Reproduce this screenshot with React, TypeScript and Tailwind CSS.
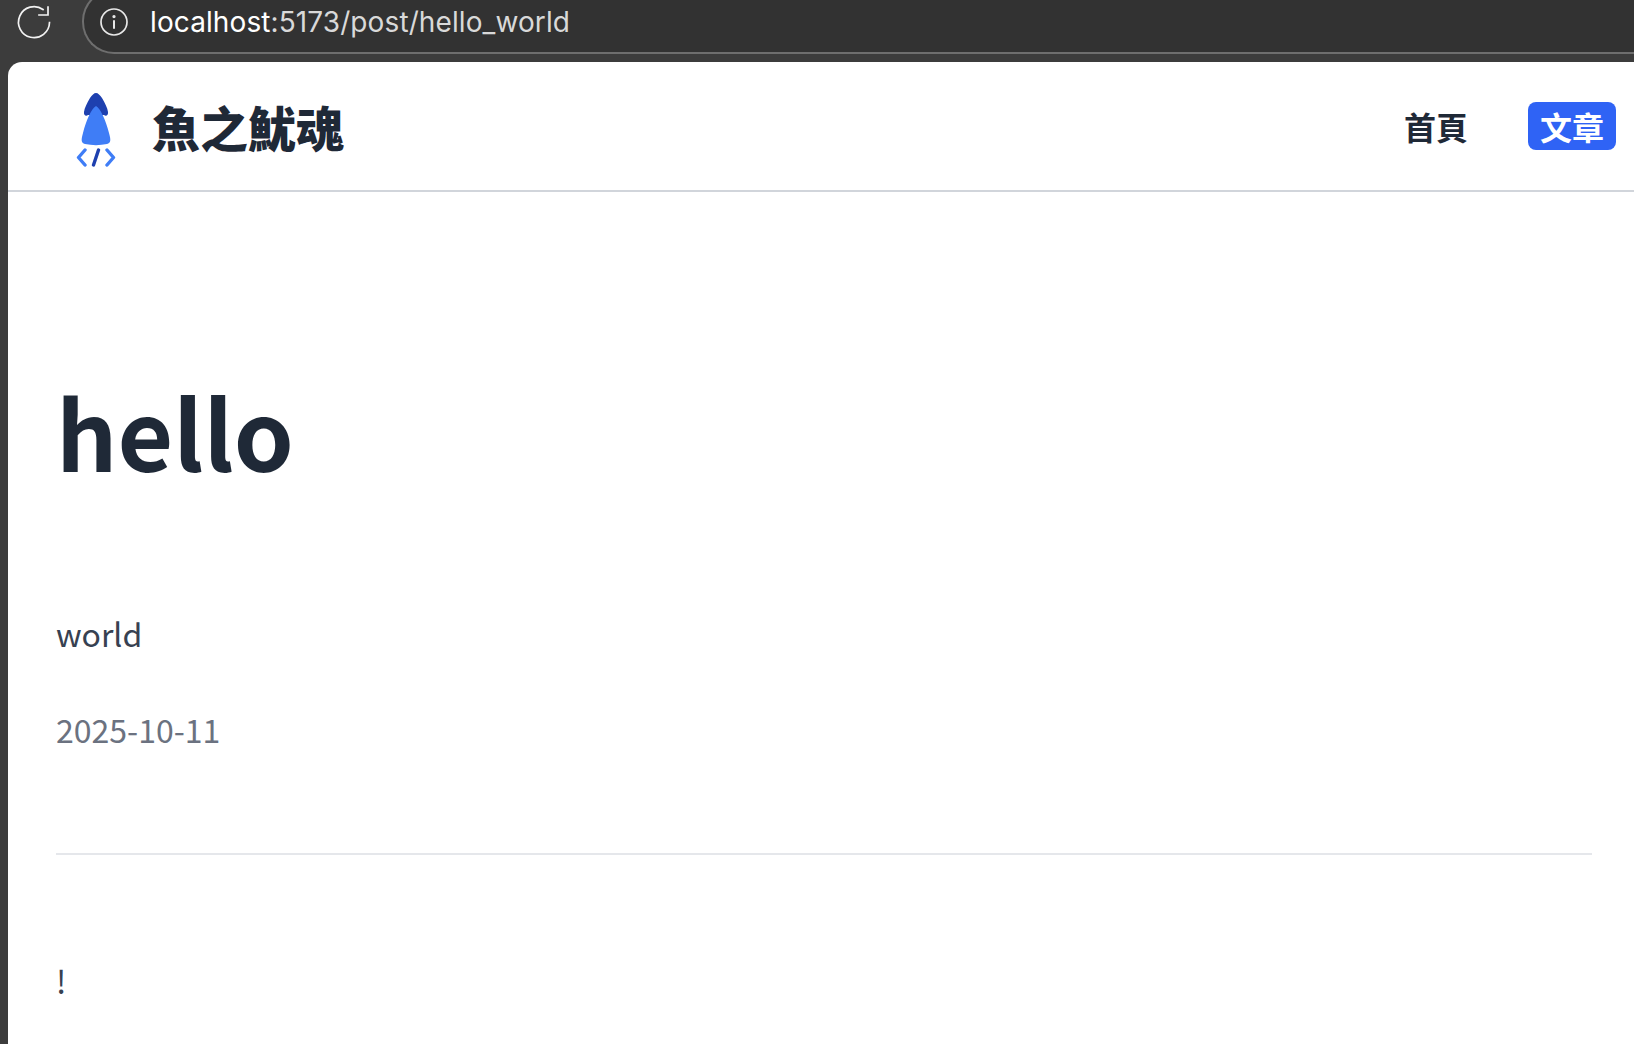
const CJK = "font-['Noto_Sans_CJK_TC','Noto_Sans_CJK_SC',sans-serif]";

function ReloadIcon() {
  return (
    <svg width="40" height="40" viewBox="0 0 40 40" fill="none" stroke="#f2f2f2" strokeWidth="1.7" strokeLinecap="square" strokeLinejoin="miter">
      <path d="M35.500 18.500A15.500 15.500 0 1 1 29 5.500" />
      <path d="M34 3v8h-9" />
    </svg>
  );
}

function InfoIcon() {
  return (
    <svg width="28" height="28" viewBox="0 0 28 28" fill="none" stroke="#e8e8e8" strokeWidth="1.7" strokeLinecap="round">
      <circle cx="14" cy="14" r="13" />
      <path d="M14 13v7" strokeWidth="2" />
      <circle cx="14" cy="8.600" r="0.800" fill="#e8e8e8" />
    </svg>
  );
}

function Logo() {
  return (
    <svg width="40" height="74" viewBox="0 0 40 74" fill="none">
      <path d="M20 0C22 0 24 2 26 5C29 10 31.500 15 32 19C32.500 22 30 24 28 22L12 22C10 24 7.500 22 8 19C8.500 15 11 10 14 5C16 2 18 0 20 0Z" fill="#1e40af" />
      <path d="M20 13C25 16 30 28 33 40C35 47 35 50 31 51C24 52.500 16 52.500 9 51C5 50 5 47 7 40C10 28 15 16 20 13Z" fill="#3f7df6" />
      <path d="M9 57L2.500 64.500L9 72" stroke="#3f7df6" strokeWidth="3.400" strokeLinecap="round" strokeLinejoin="round" />
      <path d="M31 57L37.500 64.500L31 72" stroke="#3f7df6" strokeWidth="3.400" strokeLinecap="round" strokeLinejoin="round" />
      <path d="M22.500 57L17.500 72" stroke="#1e40af" strokeWidth="3.400" strokeLinecap="round" />
    </svg>
  );
}

export default function App() {
  return (
    <div className={`h-[1044px] w-[1634px] overflow-hidden bg-[#3c3c3c] ${CJK}`}>
      <div className="flex h-[54px] items-start overflow-hidden">
        <div className="ml-[14px] mt-[4px] shrink-0">
          <ReloadIcon />
        </div>
        <div className="-mt-[11px] ml-[28px] flex h-[65px] grow items-center gap-[22px] rounded-l-[32px] border-2 border-r-0 border-[#6e6e6e] bg-[#323232] pl-[16px]">
          <InfoIcon />
          <div className="mt-[1px] font-['Inter',sans-serif] text-[28px] leading-[34px] tracking-[0.1px] text-[#d9d9d9]">
            <span className="text-white">localhost</span>:5173/post/hello_world
          </div>
        </div>
      </div>

      <div className="ml-2 mt-[8px] h-[982px] rounded-tl-[14px] bg-white">
        <header className="flex h-[130px] items-center justify-between border-b-2 border-[#d1d5db] pl-[68px] pr-[18px]">
          <div className="flex items-center gap-[36px]">
            <div className="mt-2">
              <Logo />
            </div>
            <div className="text-5xl font-black leading-none text-[#1f2937]">魚之魷魂</div>
          </div>
          <nav className="flex items-center gap-[60px] text-[32px] font-bold leading-[48px]">
            <a className="text-[#1f2937]">首頁</a>
            <a className="rounded-lg bg-[#2f63f5] px-3 text-white">文章</a>
          </nav>
        </header>

        <main className="pl-12 pr-[42px] pt-[191px]">
          <h1 className="text-8xl font-bold leading-[96px] text-[#1f2937]">hello</h1>
          <p className="mt-[130px] text-[32px] leading-[48px] text-[#374151]">world</p>
          <p className="mt-[48px] text-[32px] leading-[48px] text-[#6b7280]">2025-10-11</p>
          <hr className="mt-[100px] border-t-2 border-[#e5e7eb]" />
          <p className="mt-[101px] text-[32px] leading-[48px] text-[#374151]">!</p>
        </main>
      </div>
    </div>
  );
}
